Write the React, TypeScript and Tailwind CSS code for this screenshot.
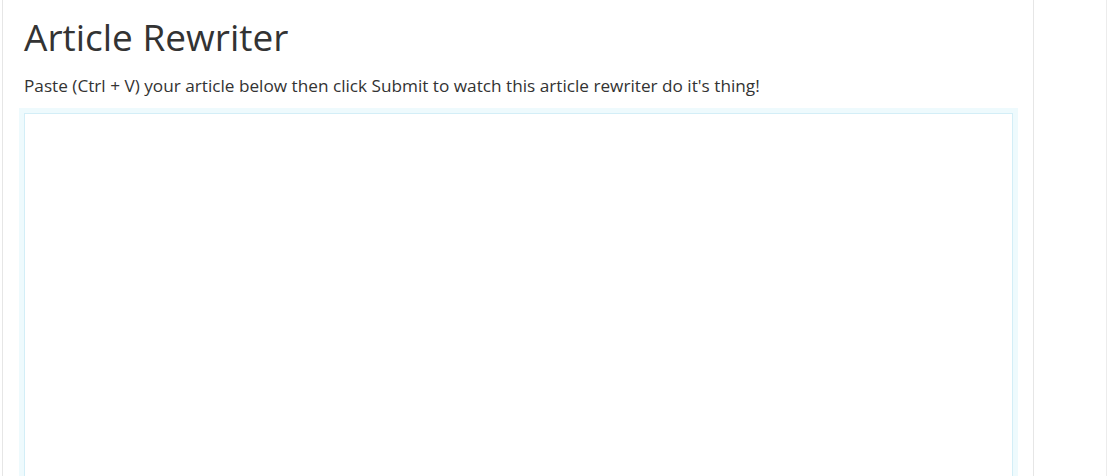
export default function App() {
  return (
    <div className="flex h-[476px] w-[1107px] overflow-hidden bg-white font-['Open_Sans','Liberation_Sans',sans-serif] text-[#333]">
      {/* Main column */}
      <main className="ml-[2px] w-[1032px] shrink-0 border-x border-[#e6e6e6] pl-[21px] pr-[20px] pt-[14px]">
        <h1 className="text-[37px] leading-[46px] font-normal text-[#333]">Article Rewriter</h1>
        <p className="mt-[14px] text-[17.2px] leading-[24px]">
          Paste (Ctrl + V) your article below then click Submit to watch this article rewriter do it's thing!
        </p>
        <textarea
          className="mt-[15px] block h-[400px] w-[989px] resize-none border border-[#d3eef7] bg-white p-2 shadow-[0_0_0_5px_#eefafd] outline-none"
          aria-label="Article text"
        />
      </main>

      {/* Sidebar */}
      <aside className="w-[73px] shrink-0 border-r border-[#ececec]" />
    </div>
  );
}
